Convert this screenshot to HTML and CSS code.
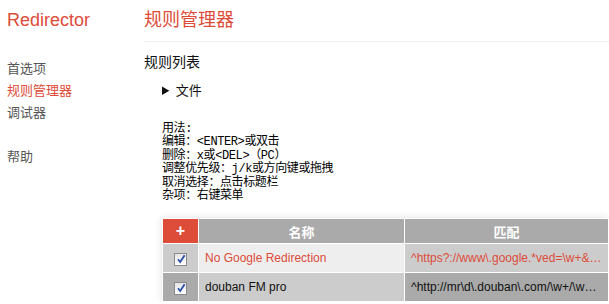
FILE: index.html
```html
<!DOCTYPE html>
<html lang="zh-CN">
<head>
  <meta charset="UTF-8" />
  <title>Redirector - 规则管理器</title>
  <link rel="stylesheet" href="styles.css">
</head>
<body>
  <div class="page">
    <div class="sidebar">
      <div class="brand">Redirector</div>
      <ul class="nav">
        <li>首选项</li>
        <li class="active">规则管理器</li>
        <li>调试器</li>
        <li class="spacer"></li>
        <li>帮助</li>
      </ul>
    </div>

    <div class="main">
      <h1 class="title">规则管理器</h1>

      <h2 class="section">规则列表</h2>

      <details class="file">
        <summary>文件</summary>
      </details>

      <pre class="usage">用法:
编辑：&lt;ENTER&gt;或双击
删除：x或&lt;DEL&gt;（PC）
调整优先级：j/k或方向键或拖拽
取消选择：点击标题栏
杂项：右键菜单</pre>

      <table class="rules">
        <thead>
          <tr>
            <th class="add">+</th>
            <th class="name">名称</th>
            <th class="match">匹配</th>
          </tr>
        </thead>
        <tbody>
          <tr class="odd">
            <td class="check"><span class="box"><svg width="10" height="10" viewBox="0 0 10 10"><path d="M2 5.2 L4.2 8 L8.6 1.2" fill="none" stroke="#2b4fa8" stroke-width="1.8"/></svg></span></td>
            <td class="name selected">No Google Redirection</td>
            <td class="match selected">^https?://www\.google.*ved=\w+&amp;url=(.*?)&amp;.*</td>
          </tr>
          <tr class="even">
            <td class="check"><span class="box"><svg width="10" height="10" viewBox="0 0 10 10"><path d="M2 5.2 L4.2 8 L8.6 1.2" fill="none" stroke="#2b4fa8" stroke-width="1.8"/></svg></span></td>
            <td class="name">douban FM pro</td>
            <td class="match">^http://mr\d\.douban\.com/\w+/\w+/\w+</td>
          </tr>
        </tbody>
      </table>
    </div>
  </div>
</body>
</html>
```

FILE: styles.css
```css
html, body {
  margin: 0;
  overflow: hidden;
}

body {
  font-family: "Liberation Sans", "Noto Sans CJK SC", sans-serif;
  color: #222;
  background: #fff;
}

.page {
  display: flex;
}

.sidebar {
  width: 137px;
  flex: none;
  padding-left: 7px;
}

.brand {
  margin-top: 9px;
  font-size: 18px;
  line-height: 22px;
  color: #dd4b39;
}

.nav {
  list-style: none;
  margin: 27px 0 0;
  padding: 0;
  font-size: 13px;
  line-height: 22px;
  color: #555;
}

.nav .active {
  color: #dd4b39;
}

.nav .spacer {
  height: 22px;
}

.main {
  flex: 1;
  min-width: 0;
  overflow: hidden;
}

.title {
  margin: 9px 0 0;
  padding-bottom: 10px;
  border-bottom: 1px solid #eee;
  font-size: 18px;
  line-height: 22px;
  font-weight: normal;
  color: #dd4b39;
}

.section {
  margin: 10px 0 0;
  font-size: 14px;
  line-height: 20px;
  font-weight: normal;
  color: #111;
}

.file {
  margin: 9px 0 0 18px;
  font-size: 13px;
  line-height: 20px;
  color: #111;
}

.file summary {
  cursor: pointer;
}

.usage {
  margin: 22px 0 0 18px;
  font-family: "Liberation Mono", "Noto Sans CJK SC", monospace;
  font-size: 12px;
  line-height: 13.4px;
  letter-spacing: -0.4px;
  color: #000;
}

.rules {
  margin: 15px 0 0 18px;
  border-spacing: 1px;
  background: #fff;
  box-shadow: 0 0 8px rgba(0, 0, 0, 0.12);
  font-size: 12px;
  table-layout: fixed;
  width: 447px;
}

.rules th {
  height: 24px;
  padding: 0;
  background: #aaa;
  color: #fff;
  font-size: 13px;
  font-weight: bold;
}

.rules th.add {
  width: 35px;
  background: #dd4b39;
  font-size: 16px;
}

.rules th.name {
  width: 205px;
}

.rules td {
  height: 28px;
  padding: 0 6px;
  white-space: nowrap;
  overflow: hidden;
  text-overflow: ellipsis;
  color: #111;
}

.rules td.check {
  padding: 0;
  text-align: center;
}

.odd td.check { background: #ccc; }
.odd td.name { background: #eee; }
.odd td.match { background: #ccc; }

.even td.check { background: #aaa; }
.even td.name { background: #ccc; }
.even td.match { background: #aaa; }

.rules td.selected {
  color: #dd4b39;
}

.box {
  display: inline-flex;
  align-items: center;
  justify-content: center;
  width: 11px;
  height: 11px;
  border: 1px solid #8a8a8a;
  background: linear-gradient(#e6e6e6, #fff);
  vertical-align: middle;
}
```
